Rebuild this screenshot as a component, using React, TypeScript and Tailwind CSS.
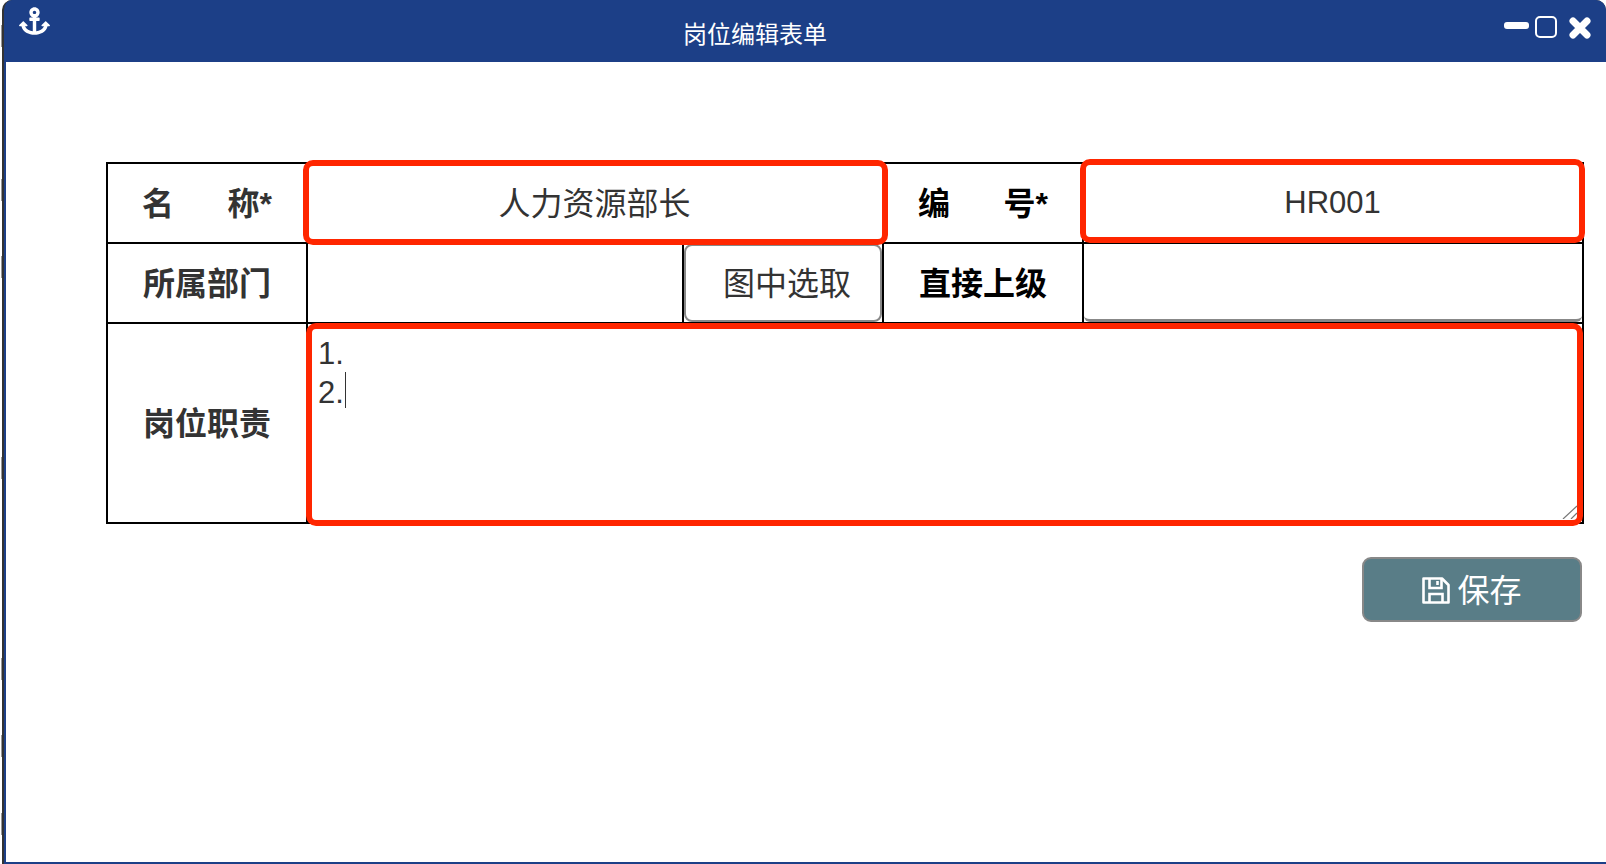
import { FaAnchor } from "react-icons/fa";

const cjk = "font-['Liberation_Sans','Noto_Sans_CJK_SC',sans-serif]";

// little grey marks along the window's left edge
const edgeMarks = ["mt-[25px]", "mt-[132px]", "mt-[55px]", "mt-[179px]", "mt-[179px]", "mt-[55px]", "mt-[56px]"];

function Label({ children, dark }: { children: React.ReactNode; dark?: boolean }) {
  return (
    <div
      className={`flex items-center justify-center border-t-2 border-l-2 border-black pt-[2px] text-[32px] leading-none font-bold whitespace-pre ${
        dark ? "text-black" : "text-[#333333]"
      }`}
    >
      {children}
    </div>
  );
}

const fieldClass =
  "block bg-white text-center text-[#333333] outline-none border-[6px] border-[#ff2600] rounded-[10px] relative z-10";

export default function App() {
  return (
    <div className={`flex h-[864px] w-[1606px] overflow-hidden bg-white ${cjk}`}>
      <div className="w-[2px] shrink-0">
        {edgeMarks.map((m, i) => (
          <div key={i} className={`${m} ml-px h-[22px] w-px bg-[#999999]`} />
        ))}
      </div>
      <div className="flex h-full min-w-0 flex-1 flex-col overflow-hidden rounded-t-[10px] border-l-2 border-[#333333] bg-[#333333]">
        <div className="flex h-[62px] shrink-0 items-start rounded-tr-[6px] bg-[#1c3f87] text-white">
          <FaAnchor className="mt-[7px] ml-[15px] h-[28px] w-[31px]" />
          <span className="mt-[19px] ml-[633px] text-[24px] leading-[32px]">岗位编辑表单</span>
          <div className="mt-[16px] ml-auto flex items-start">
            <span className="mt-[6px] h-[7px] w-[25px] rounded-[3px] bg-white" />
            <span className="ml-[6px] h-[22px] w-[22px] rounded-[5px] border-2 border-white" />
            <svg viewBox="0 0 22 22" className="mt-px mr-[15px] ml-[12px] h-[22px] w-[22px]">
              <path d="M4 4 18 18M18 4 4 18" stroke="white" strokeWidth="7" strokeLinecap="round" />
            </svg>
          </div>
        </div>

        <div className="flex-1 border-b-2 border-l-2 border-[#1c3f87] bg-white">
          <div className="mt-[100px] ml-[100px] grid w-[1478px] grid-cols-[200px_376px_200px_200px_500px] grid-rows-[80px_80px_200px] border-r-2 border-b-2 border-black">
            <Label>名{"\u00a0\u00a0\u00a0\u00a0\u00a0\u00a0"}称*</Label>
            <div className="col-span-2 border-t-2 border-l-2 border-black">
              <input
                readOnly
                value="人力资源部长"
                className={`${fieldClass} -mt-[4px] -ml-[5px] h-[85px] w-[585px] pr-[2px] pb-[4px] text-[32px]`}
              />
            </div>
            <Label dark>编{"\u00a0\u00a0\u00a0\u00a0\u00a0\u00a0"}号*</Label>
            <div className="border-t-2 border-l-2 border-black">
              <input
                readOnly
                value="HR001"
                className={`${fieldClass} -mt-[5px] -ml-[4px] h-[84px] w-[505px] pt-[3px] text-[31px]`}
              />
            </div>

            <Label>所属部门</Label>
            <div className="border-t-2 border-l-2 border-black" />
            <div className="border-t-2 border-l-2 border-black">
              <button className="flex h-[78px] w-[198px] items-center justify-center rounded-[8px] border-2 border-[#888888] bg-white pt-[2px] pl-[8px] text-[32px] text-[#333333]">
                图中选取
              </button>
            </div>
            <Label dark>直接上级</Label>
            <div className="border-t-2 border-l-2 border-black">
              <div className="h-[78px] rounded-b-[6px] border-b-[3px] border-[#888888] bg-white" />
            </div>

            <Label>岗位职责</Label>
            <div className="relative col-span-4 border-t-2 border-l-2 border-black">
              <textarea
                readOnly
                value={"1.\n2."}
                className="relative z-10 -mt-[1px] -ml-[2px] block h-[203px] w-[1277px] resize-none rounded-[10px] border-[6px] border-[#ff2600] bg-white px-[6px] py-[5px] text-[31px] leading-[39px] text-[#333333] outline-none"
              />
              {/* text caret after "2." */}
              <span className="absolute top-[48px] left-[37px] z-20 h-[36px] w-px bg-[#333333]" />
              {/* resize grip */}
              <svg viewBox="0 0 16 14" className="absolute top-[181px] right-[4px] z-20 h-[14px] w-[16px]">
                <path d="M1 14 15 1M9 14 15 8" stroke="#777777" strokeWidth="1.2" fill="none" />
              </svg>
            </div>
          </div>

          <div className="mt-[33px] ml-[1356px]">
            <button className="flex h-[65px] w-[220px] items-center justify-center gap-[7px] rounded-[9px] border-2 border-[#888888] bg-[#597d87] pt-[2px] text-[32px] text-white">
              <svg viewBox="0 0 28 27" className="h-[27px] w-[28px]" fill="none" stroke="white" strokeWidth="2.6">
                <path d="M1.5 1.5H20L26.5 8V25.5H1.5Z" strokeLinejoin="round" />
                <path d="M7.5 1.5V11H19.5V1.5" />
                <path d="M7.5 25.5V17H20.5V25.5" />
                <path d="M15.5 4V8" />
              </svg>
              保存
            </button>
          </div>
        </div>
      </div>
    </div>
  );
}
